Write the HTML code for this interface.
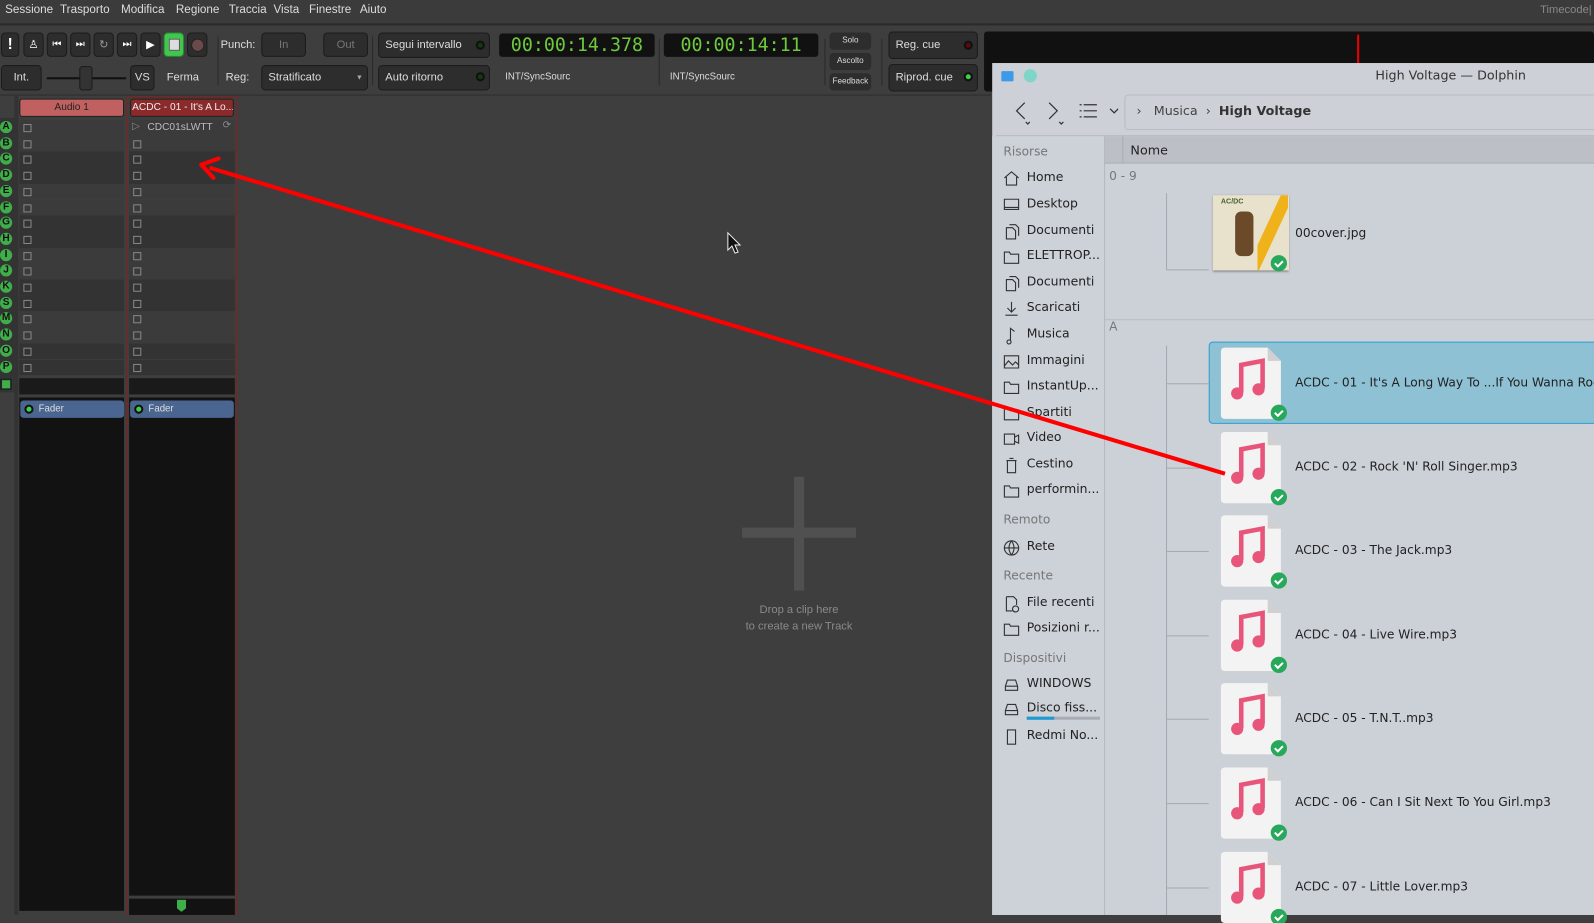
<!DOCTYPE html>
<html><head><meta charset="utf-8"><style>
*{margin:0;padding:0;box-sizing:border-box}
html,body{width:1594px;height:915px;overflow:hidden;background:#3e3e3e}
#w{position:absolute;left:0;top:0;width:1568px;height:900px;transform:scale(1.01658);transform-origin:0 0;font-family:"Liberation Sans","DejaVu Sans",sans-serif;}
.a{position:absolute}
.m{color:#ddd;font-size:11.5px;top:4px}
.btn{position:absolute;background:#2d2d2d;border:1px solid #1c1c1c;border-radius:4px;color:#ddd;font-size:11px;}
.led{position:absolute;width:9px;height:9px;border-radius:50%;background:#0f3a12;border:2px solid #111}
.t{font-size:11px;color:#ddd}
.row{position:absolute;height:15.7px}
.cb{position:absolute;width:8px;height:8px;border:1px solid #888}
.let{position:absolute;left:0;width:12px;height:12px;border-radius:50%;background:#3fae4a;color:#111;font-size:10px;text-align:center;line-height:12px;font-weight:bold}
.side{position:absolute;left:1010px;font-size:12.2px;color:#222;font-family:"DejaVu Sans",sans-serif;white-space:nowrap}
.sh{position:absolute;left:987px;font-size:12px;color:#777;font-family:"DejaVu Sans",sans-serif}
.ic{position:absolute;left:987px;overflow:visible}
.fi{position:absolute;left:1201px;width:59px;height:70px;overflow:visible}
.fn{position:absolute;left:1274px;font-size:12px;color:#222;font-family:"DejaVu Sans",sans-serif}
</style></head><body><div id="w">
<div class="a" style="left:0;top:0;width:1568px;height:23px;background:#3b3b3b"></div>
<div class="a" style="left:0;top:23px;width:1568px;height:2px;background:#2a2a2a"></div>
<span class="a m" style="left:5px">Sessione</span><span class="a m" style="left:59px">Trasporto</span><span class="a m" style="left:119px">Modifica</span><span class="a m" style="left:173px">Regione</span><span class="a m" style="left:225px">Traccia</span><span class="a m" style="left:269px">Vista</span><span class="a m" style="left:304px">Finestre</span><span class="a m" style="left:354px">Aiuto</span>
<span class="a m" style="left:1515px;color:#888;font-size:11px">Timecode|</span>
<div class="a" style="left:0;top:93px;width:975px;height:1px;background:#2e2e2e"></div>
<div class="btn" style="left:1px;top:32px;width:18px;height:24px;color:#fff;text-align:center;font-weight:bold;font-size:15px;line-height:22px">!</div>
<div class="btn" style="left:23px;top:32px;width:20px;height:24px;color:#fff;text-align:center;line-height:22px">♙</div>
<div class="btn" style="left:46px;top:32px;width:20px;height:24px;color:#fff;text-align:center;line-height:22px;font-size:10px">⏮</div>
<div class="btn" style="left:69px;top:32px;width:20px;height:24px;color:#fff;text-align:center;line-height:22px;font-size:10px">⏭</div>
<div class="btn" style="left:92px;top:32px;width:20px;height:24px;color:#999;text-align:center;line-height:22px">↻</div>
<div class="btn" style="left:115px;top:32px;width:20px;height:24px;color:#fff;text-align:center;line-height:22px;font-size:10px">⏭</div>
<div class="btn" style="left:138px;top:32px;width:20px;height:24px;color:#fff;text-align:center;line-height:22px">▶</div>
<div class="btn" style="left:161px;top:32px;width:20px;height:24px;background:#3ec94c;border-color:#2a8a34"><div class="a" style="left:4px;top:5px;width:11px;height:12px;background:#ddd;border:1px solid #555"></div></div>
<div class="btn" style="left:184px;top:32px;width:20px;height:24px"><div class="a" style="left:3px;top:5px;width:13px;height:13px;border-radius:50%;background:#6a4a4a;border:1px solid #222"></div></div>
<span class="a t" style="left:217px;top:38px">Punch:</span>
<div class="btn" style="left:257px;top:32px;width:44px;height:24px;color:#777;text-align:center;line-height:22px">In</div>
<div class="btn" style="left:318px;top:32px;width:44px;height:24px;color:#777;text-align:center;line-height:22px">Out</div>
<div class="a" style="left:366px;top:36px;width:1px;height:48px;background:#2a2a2a"></div>
<div class="btn" style="left:372px;top:32px;width:110px;height:25px;line-height:23px;padding-left:6px">Segui intervallo</div><div class="led" style="left:468px;top:40px"></div>
<div class="btn" style="left:372px;top:64px;width:110px;height:25px;line-height:23px;padding-left:6px">Auto ritorno</div><div class="led" style="left:468px;top:71px"></div>
<div class="btn" style="left:1px;top:64px;width:40px;height:25px;text-align:center;line-height:23px">Int.</div>
<div class="a" style="left:46px;top:76px;width:78px;height:2px;background:#111"></div>
<div class="a" style="left:78px;top:65px;width:13px;height:24px;background:#333;border:1px solid #1a1a1a;border-radius:3px"></div>
<div class="btn" style="left:128px;top:64px;width:24px;height:25px;text-align:center;line-height:23px">VS</div>
<span class="a t" style="left:164px;top:70px">Ferma</span>
<div class="a" style="left:214px;top:36px;width:1px;height:48px;background:#2a2a2a"></div>
<span class="a t" style="left:222px;top:70px">Reg:</span>
<div class="btn" style="left:257px;top:64px;width:105px;height:25px;line-height:23px;padding-left:6px">Stratificato<span style="position:absolute;right:4px;font-size:7px;color:#aaa">▼</span></div>
<div class="a" style="left:491px;top:33px;width:153px;height:23px;background:#111;border-radius:3px;color:#6ec93c;font-size:18px;font-family:'DejaVu Sans Mono',monospace;text-align:center;line-height:23px">00:00:14.378</div>
<div class="a" style="left:653px;top:33px;width:152px;height:23px;background:#111;border-radius:3px;color:#6ec93c;font-size:18px;font-family:'DejaVu Sans Mono',monospace;text-align:center;line-height:23px">00:00:14:11</div>
<span class="a" style="left:497px;top:70px;font-size:9.5px;color:#ddd">INT/SyncSourc</span>
<span class="a" style="left:659px;top:70px;font-size:9.5px;color:#ddd">INT/SyncSourc</span>
<div class="a" style="left:648px;top:38px;width:1px;height:46px;background:#2a2a2a"></div>
<div class="a" style="left:811px;top:38px;width:1px;height:46px;background:#2a2a2a"></div>
<div class="btn" style="left:816px;top:32px;width:41px;height:17px;font-size:8px;text-align:center;line-height:15px;border:none">Solo</div>
<div class="btn" style="left:816px;top:52px;width:41px;height:17px;font-size:8px;text-align:center;line-height:15px;border:none">Ascolto</div>
<div class="btn" style="left:816px;top:72px;width:41px;height:17px;font-size:8px;text-align:center;line-height:15px;border:none">Feedback</div>
<div class="a" style="left:867px;top:38px;width:1px;height:46px;background:#2a2a2a"></div>
<div class="btn" style="left:874px;top:31px;width:88px;height:27px;line-height:25px;padding-left:6px">Reg. cue</div><div class="led" style="left:948px;top:40px;background:#5a0a0a"></div>
<div class="btn" style="left:874px;top:63px;width:88px;height:27px;line-height:25px;padding-left:6px">Riprod. cue</div><div class="led" style="left:948px;top:71px;background:#3cd048"></div>
<div class="a" style="left:968px;top:31px;width:600px;height:59px;background:#111;border-radius:3px"></div>
<div class="a" style="left:1335px;top:34px;width:1.5px;height:30px;background:#e00"></div>
<div class="a" style="left:0;top:116px;width:14px;height:270px;background:#333"></div>
<div class="a" style="left:14px;top:94px;width:4px;height:806px;background:#333"></div>
<div class="a" style="left:19px;top:97px;width:103px;height:18px;background:#c06060;border:1px solid #222;border-radius:3px;color:#222;font-size:10px;text-align:center;line-height:16px">Audio 1</div>
<div class="a" style="left:125px;top:95px;width:108px;height:805px;border:1.5px solid #8a1e1e"></div>
<div class="a" style="left:128px;top:97px;width:102px;height:18px;background:#8a2a2a;border:1px solid #222;border-radius:3px;color:#eee;font-size:10px;line-height:16px;padding-left:1px;white-space:nowrap;overflow:hidden">ACDC - 01 - It's A Lo...</div>
<div id="rows"></div>
<div class="a" style="left:19px;top:372px;width:103px;height:16px;background:#1a1a1a"></div>
<div class="a" style="left:127px;top:372px;width:104px;height:16px;background:#1a1a1a"></div>
<div class="a" style="left:0;top:372px;width:12px;height:12px;background:#3fae4a;border:2px solid #222"></div>
<div class="a" style="left:19px;top:391px;width:103px;height:505px;background:#121212"></div>
<div class="a" style="left:127px;top:391px;width:104px;height:490px;background:#121212"></div>
<div class="a" style="left:127px;top:884px;width:104px;height:16px;background:#121212"></div>
<div class="a" style="left:174px;top:885px;width:9px;height:12px;background:#3fae4a;clip-path:polygon(0 0,100% 0,100% 70%,50% 100%,0 70%)"></div>
<div class="a" style="left:20px;top:394px;width:102px;height:17px;background:#4a6690;border-radius:3px;color:#ddd;font-size:9.5px;line-height:17px;padding-left:18px">Fader<div class="a" style="left:4px;top:4px;width:9px;height:9px;border-radius:50%;background:#3fd048;border:2px solid #111"></div></div>
<div class="a" style="left:128px;top:394px;width:102px;height:17px;background:#4a6690;border-radius:3px;color:#ddd;font-size:9.5px;line-height:17px;padding-left:18px">Fader<div class="a" style="left:4px;top:4px;width:9px;height:9px;border-radius:50%;background:#3fd048;border:2px solid #111"></div></div>
<div class="a" style="left:730px;top:519px;width:112px;height:10px;background:#505050"></div>
<div class="a" style="left:781px;top:469px;width:10px;height:112px;background:#505050"></div>
<div class="a" style="left:700px;top:592px;width:172px;text-align:center;color:#8a8a8a;font-size:11px;line-height:16px">Drop a clip here<br>to create a new Track</div>
<div class="a" style="left:976px;top:62px;width:592px;height:838px;background:#cdd0d6"></div>
<div class="a" style="left:985px;top:70px;width:12px;height:10px;background:#3d9ae8;border-radius:1px"></div>
<div class="a" style="left:1007px;top:68px;width:13px;height:13px;border-radius:50%;background:#7fd6c8"></div>
<div class="a" style="left:1353px;top:66px;font-size:12.5px;color:#333;font-family:'DejaVu Sans',sans-serif">High Voltage — Dolphin</div>
<svg class="a" style="left:990px;top:96px" width="110" height="30"><g fill="none" stroke="#333" stroke-width="1.2"><path d="M18 5 L10 13 L18 21"/><path d="M42 5 L50 13 L42 21"/><path d="M19 24l2 2 2-2M52 24l2 2 2-2"/><path d="M76 7h13M76 13h13M76 19h13"/><path d="M72 7h2M72 13h2M72 19h2"/><path d="M102 11l4 4 4-4"/></g></svg>
<div class="a" style="left:1106px;top:93px;width:470px;height:35px;border:1px solid #b8bcc4;border-radius:4px"></div>
<div class="a" style="left:1118px;top:101px;font-size:12.5px;color:#444;font-family:'DejaVu Sans',sans-serif">›&nbsp;&nbsp; Musica &nbsp;›&nbsp;&nbsp;<b style="color:#333">High Voltage</b></div>
<div class="a" style="left:980px;top:133px;width:588px;height:1px;background:#b5b9c0"></div>
<div class="a" style="left:976px;top:134px;width:110px;height:766px;background:#cdd1d8"></div>
<div class="a" style="left:1086px;top:134px;width:1px;height:766px;background:#b5b9c0"></div>
<div class="a" style="left:1087px;top:134px;width:481px;height:27px;background:#bcc0c6;border-bottom:1px solid #a8acb2"></div>
<div class="a" style="left:1104px;top:134px;width:1px;height:27px;background:#a8acb2"></div>
<div class="a" style="left:1112px;top:140px;font-size:12.5px;color:#222;font-family:'DejaVu Sans',sans-serif">Nome</div>
<div class="a" style="left:1087px;top:161px;width:481px;height:739px;background:#ccd0d7"></div>
<div class="a" style="left:1091px;top:166px;font-size:12px;color:#777;font-family:'DejaVu Sans',sans-serif">0 - 9</div>
<div class="a" style="left:1087px;top:314px;width:481px;height:1px;background:#b8bcc3"></div>
<div class="a" style="left:1091px;top:314px;font-size:12px;color:#777;font-family:'DejaVu Sans',sans-serif">A</div>
<div class="a" style="left:1147px;top:190px;width:1px;height:75px;background:#a5a9b0"></div>
<div class="a" style="left:1147px;top:265px;width:42px;height:1px;background:#a5a9b0"></div>
<div class="a" style="left:1147px;top:340px;width:1px;height:560px;background:#a5a9b0"></div>
<div class="a" style="left:1193px;top:192px;width:75px;height:74px;background:#e8e2cc;box-shadow:0 1px 2px #777;overflow:hidden"><div class="a" style="left:44px;top:0;width:30px;height:74px;background:linear-gradient(115deg,transparent 35%,#f0b21a 36%,#f0b21a 55%,transparent 56%)"></div><div class="a" style="left:22px;top:16px;width:18px;height:44px;background:#6b4a2a;border-radius:6px"></div><div class="a" style="left:8px;top:3px;font-size:7px;color:#486030;font-weight:bold">AC/DC</div></div>
<svg class="a" style="left:1249px;top:250px" width="18" height="18"><circle cx="9" cy="9" r="8" fill="#27a85a"/><path d="M5 9l3 3 5-5" stroke="#fff" stroke-width="2" fill="none"/></svg>
<div class="a" style="left:1274px;top:222px;font-size:12px;color:#222;font-family:'DejaVu Sans',sans-serif">00cover.jpg</div>
<div class="a" style="left:1189px;top:336px;width:390px;height:81px;background:#8fc1d5;border:1px solid #2a9ed0;border-radius:4px"></div>
<div id="files"></div>
<div id="side"></div>
<svg class="a" style="left:0;top:0" width="1568" height="900"><line x1="1205" y1="466" x2="206" y2="165" stroke="#f00" stroke-width="4"/><path d="M198 162 L215 156 M198 162 L210 175" stroke="#f00" stroke-width="4" stroke-linecap="round"/>
<path d="M716 229 L716 246 L720 242 L723 249 L726 248 L723 241 L728 241 Z" fill="#111" stroke="#eee" stroke-width="1"/></svg>
</div>
<script>
var L="ABCDEFGHIJKSMNOP",h="";
for(var i=0;i<16;i++){var y=118+i*15.7,bg=(Math.floor(i/2)%2)?'#333':'#3b3b3b';
h+='<div class="let" style="top:'+(y+1)+'px">'+L[i]+'</div>';
h+='<div class="row" style="left:19px;width:103px;top:'+y+'px;background:'+bg+'"><div class="cb" style="left:4px;top:4px"></div></div>';
h+='<div class="row" style="left:127px;width:104px;top:'+y+'px;background:'+bg+'">'+(i==0?'<span style="position:absolute;left:3px;top:1px;font-size:10px;color:#888">▷</span><span style="position:absolute;left:18px;top:2px;font-size:10px;color:#bbb">CDC01sLWTT</span><span style="position:absolute;left:92px;top:0;font-size:10px;color:#888">⟳</span>':'<div class="cb" style="left:4px;top:4px"></div>')+'</div>';}
document.getElementById('rows').innerHTML=h;
var F=["ACDC - 01 - It's A Long Way To ...If You Wanna Rock","ACDC - 02 - Rock 'N' Roll Singer.mp3","ACDC - 03 - The Jack.mp3","ACDC - 04 - Live Wire.mp3","ACDC - 05 - T.N.T..mp3","ACDC - 06 - Can I Sit Next To You Girl.mp3","ACDC - 07 - Little Lover.mp3"];h="";
for(var i=0;i<7;i++){var c=377+i*82.6;
h+='<div class="a" style="left:1147px;top:'+c+'px;width:42px;height:1px;background:#a5a9b0"></div>';
h+='<svg class="fi" style="top:'+(c-35)+'px" viewBox="0 0 59 70"><path d="M4 0H46L59 13V66Q59 70 55 70H4Q0 70 0 66V4Q0 0 4 0Z" fill="#f3f3f3"/><path d="M46 0V13H59Z" fill="#d0d0d0"/><path d="M20 44V17L41 13V40" stroke="#e8557a" stroke-width="4.5" fill="none"/><circle cx="16" cy="45" r="6" fill="#e8557a"/><circle cx="37" cy="41" r="6" fill="#e8557a"/><circle cx="57" cy="64" r="8" fill="#27a85a"/><path d="M53 64l3 3 5-5" stroke="#fff" stroke-width="2" fill="none"/></svg>';
h+='<div class="fn" style="top:'+(c-8)+'px;white-space:nowrap">'+F[i]+'</div>';}
document.getElementById('files').innerHTML=h;
var P={home:'M1 7L8 1L15 7M3 6V14H13V6',desk:'M1 2H15V12H1ZM1 10H15',doc:'M3 4H9L12 7V15H3ZM6 1H12L15 4V12',fold:'M1 3H6L7 5H15V14H1Z',down:'M8 1V11M4 7L8 11L12 7M2 14H14',mus:'M7 13V1L11 4M7 13A2 2 0 1 1 6.9 12.9',img:'M1 2H15V14H1ZM1 12L5 7L9 11L12 8L15 11',vid:'M1 3H11V13H1ZM11 6L15 4V12L11 10',trash:'M3 3H13M6 1H10M4 3V15H12V3',net:'M8 1A7 7 0 1 0 8.01 1M1 8H15M8 1Q3 8 8 15M8 1Q13 8 8 15',rec:'M3 1H10L13 4V9M3 1V15H9M12 10A3 3 0 1 0 12.01 10',drv:'M2 9L4 3H12L14 9V13H2ZM2 9H14',ph:'M4 1H12V15H4Z'};
var S=[["sh","Risorse",142],["Home",167,'home'],["Desktop",193,'desk'],["Documenti",219,'doc'],["ELETTROP...",244,'fold'],["Documenti",270,'doc'],["Scaricati",295,'down'],["Musica",321,'mus'],["Immagini",347,'img'],["InstantUp...",372,'fold'],["Spartiti",398,'fold'],["Video",423,'vid'],["Cestino",449,'trash'],["performin...",474,'fold'],["sh","Remoto",504],["Rete",530,'net'],["sh","Recente",559],["File recenti",585,'rec'],["Posizioni r...",610,'fold'],["sh","Dispositivi",640],["WINDOWS",665,'drv'],["Disco fiss...",689,'drv'],["Redmi No...",716,'ph']];h="";
S.forEach(function(s){if(s[0]=="sh")h+='<div class="sh" style="top:'+s[2]+'px">'+s[1]+'</div>';else{h+='<div class="side" style="top:'+s[1]+'px">'+s[0]+'</div><svg class="ic" style="top:'+(s[1]+1)+'px" width="16" height="16"><path d="'+P[s[2]]+'" fill="none" stroke="#333" stroke-width="1.1"/></svg>';}});
h+='<div class="a" style="left:1010px;top:705px;width:72px;height:3px;background:#a8acb2"></div><div class="a" style="left:1010px;top:705px;width:27px;height:3px;background:#1d99d3"></div>';
document.getElementById('side').innerHTML=h;
</script>
</body></html>
